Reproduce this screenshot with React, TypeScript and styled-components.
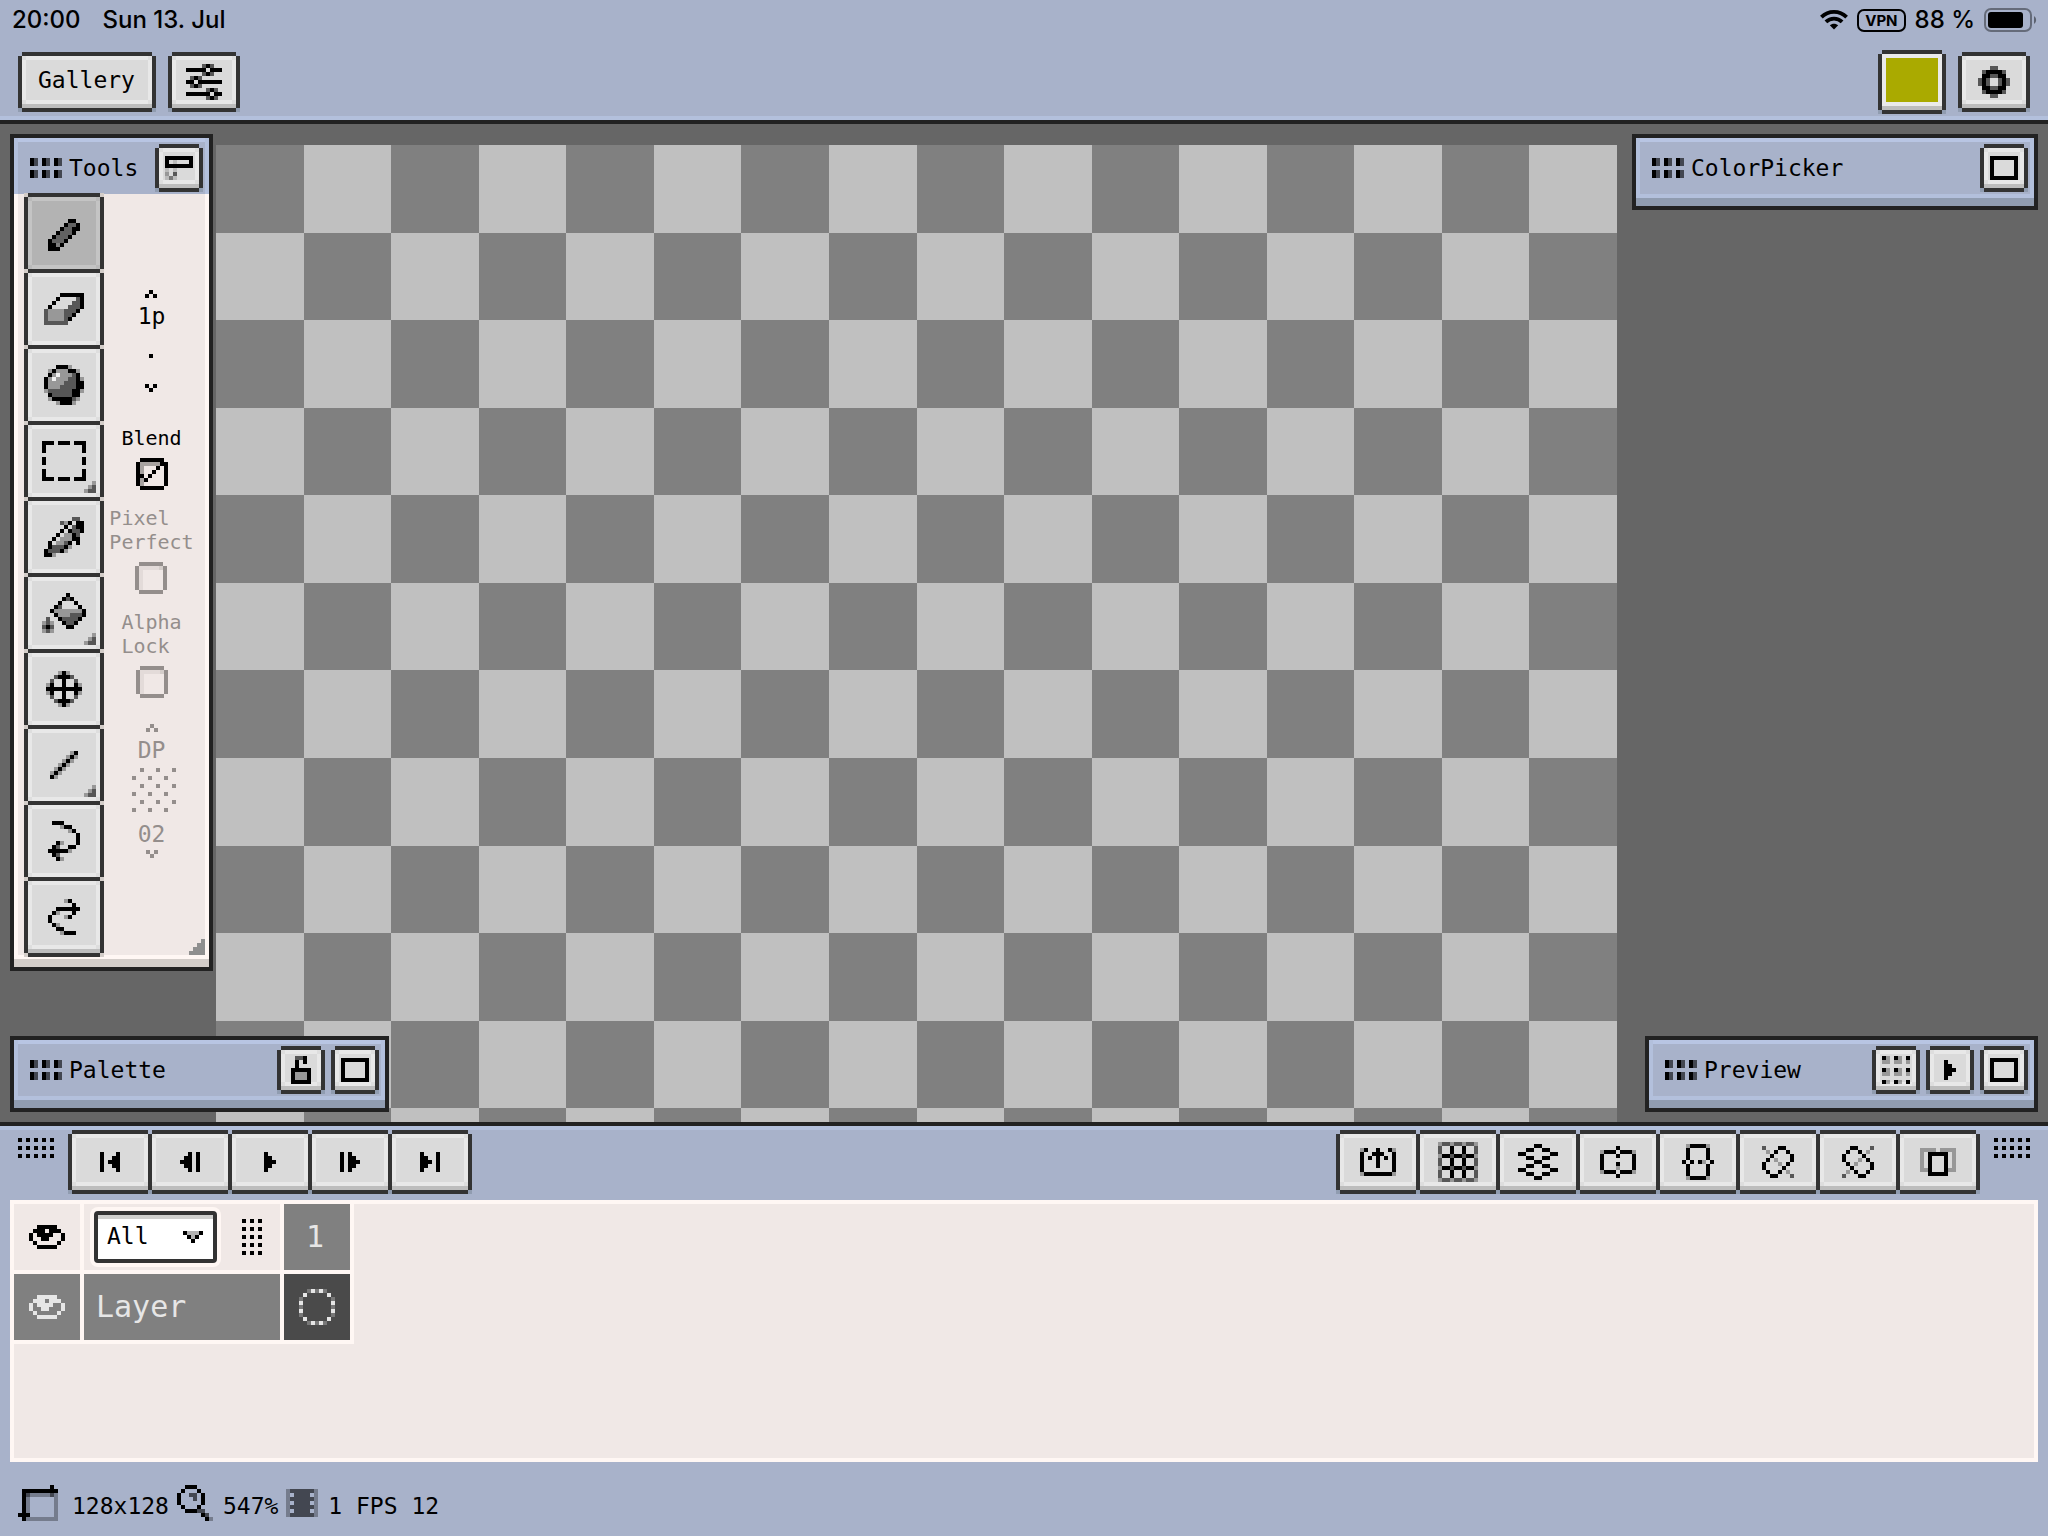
import React from "react";
import styled, { createGlobalStyle, css } from "styled-components";

const c = {
  bar: "#a8b2ca",
  barLight: "#b3c0dc",
  barTop: "#b8c5e3",
  barShade: "#909cb0",
  ink: "#222222",
  edge: "#333333",
  paper: "#f0e8e6",
  paperLight: "#fff7f4",
  paperShade: "#d3cdc9",
  desk: "#666666",
  cell: "#808080",
  cellDark: "#4a4a4a",
  cellText: "#e6e6e6",
  muted: "#948e8c",
};

const mono = `"DejaVu Sans Mono", "Liberation Mono", monospace`;
const sans = `Inter, "Liberation Sans", sans-serif`;

const GlobalStyle = createGlobalStyle`
  *, *::before, *::after { box-sizing: border-box; }
  body { margin: 0; background: ${c.bar}; }
  button, input, select { margin: 0; padding: 0; font: inherit; color: inherit; }
`;

/* ---------- pixel art ---------- */

const PX = 4;
const ALPHA: Record<string, number> = { "#": 1, d: 0.6, m: 0.45, g: 0.3, l: 0.14 };

function runs(rows: string[], key: string) {
  let d = "";
  rows.forEach((row, y) => {
    let x = 0;
    while (x < row.length) {
      if (row[x] !== key) {
        x++;
        continue;
      }
      let end = x;
      while (end < row.length && row[end] === key) end++;
      d += `M${x} ${y}h${end - x}v1h${x - end}z`;
      x = end;
    }
  });
  return d;
}

const Svg = styled.svg`
  display: block;
  flex: none;
  shape-rendering: crispEdges;
`;

function Pixels({ rows }: { rows: string[] }) {
  const w = Math.max(...rows.map((r) => r.length));
  const h = rows.length;
  return (
    <Svg width={w * PX} height={h * PX} viewBox={`0 0 ${w} ${h}`} fill="currentColor" aria-hidden="true">
      {Object.keys(ALPHA).map((key) => {
        const d = runs(rows, key);
        return d ? <path key={key} d={d} fillOpacity={ALPHA[key]} /> : null;
      })}
      {runs(rows, "w") && <path d={runs(rows, "w")} fill="#fff" fillOpacity={0.6} />}
    </Svg>
  );
}

const mirror = (rows: string[]) => rows.map((r) => r.split("").reverse().join(""));

const art = {
  sliders: ["....d#d..", "#####.###", "....d#d..", ".d#d.....", "##.######", ".d#d.....", ".....d#d.", "######.##", ".....d#d."],
  gear: ["...dd...", ".d####d.", ".##dd##.", "d#d..d#d", "d#d..d#d", ".##dd##.", ".d####d.", "...dd..."],
  handle: ["#d.#d.#d", "#d.#d.#d", "........", "#d.#d.#d", "#d.#d.#d"],
  dock: ["#######", "#.l...#", "#######", "l.l....", "g.d....", "lml...."],
  square: ["#######", "#.....#", "#.....#", "#.....#", "#.....#", "#######"],
  lock: [".dd#.", ".#.#.", ".#...", "#####", "#ggg#", "#ggg#", "#####"],
  tiles: ["#g.#g.#", "gg.gg.g", ".......", "#g.#g.#", "gg.gg.g", ".......", "#g.#g.#"],
  pencil: ["", ".....##.", "....#mm#", "...#mm##", "..#mmm#.", ".#mmm#..", "#mmm#...", "##g#....", "###....."],
  eraser: ["....######", "...#....d#", "..#....dd#", ".#....ddd#", "dggggddd#.", "dggggdd#..", "dggggd#...", "dddddd...."],
  ball: ["...###g...", ".g#ggg##g.", ".#gwgggd#.", "#gwgggdd#g", "#ggggddd##", "#gggdddd##", "gdddddd##g", ".#ddddd##.", ".g#####dg.", "...g###g.."],
  select: [
    "###.###.###",
    "#.........#",
    "#.........#",
    "...........",
    "#.........#",
    "#.........#",
    "...........",
    "#.........#",
    "#.........#",
    "###.###.###",
  ],
  dropper: [".......dd.", "....dg#.##", ".....#.d##", "....#.#dd#", "...#.gg#d.", "..#.ggg##.", ".#.ggd#.#.", ".#ddd#g...", "#ddd#g....", "##g......."],
  bucket: [
    "......#....",
    ".....#d#...",
    "....#...#..",
    "...#d....#.",
    "..#ggggggg#",
    "...#gggddd#",
    ".d..#dddd#.",
    "gdg..#dd#..",
    "d#d...##...",
    "gdg........",
  ],
  move: ["...g#g...", "..d###d..", ".d..#..d.", "g#..#..#g", "#########", "g#..#..#g", ".d..#..d.", "..d###d..", "...g#g..."],
  line: [".....g#", "....g#g", "...g#g.", "..g#g..", ".g#g...", "g#g....", "#g....."],
  undo: [".###....", "...g##..", ".....g#.", ".......#", ".......#", "..#g...#", ".#d..##.", "#####g..", ".#d.....", "..#g...."],
  redo: ["....g#..", "......#.", "..######", ".#g...#.", "#...g#..", "#.......", ".#g.....", "..##....", "...g###."],
  corner: ["..g", ".gd", "gdd"],
  resize: ["...#", "..##", ".###", "####"],
  up: [".#.", "#.#"],
  down: ["#.#", ".#."],
  dot: ["#"],
  checked: [".######.", "#ggggg##", "#g...#.#", "#g..#..#", "##.#...#", "#g#....#", "#g.....#", ".######."],
  unchecked: [".######.", "#lllllg#", "#l.....#", "#l.....#", "#l.....#", "#l.....#", "#l.....#", ".######."],
  dither: [
    "...#...#...#",
    "",
    ".#...#...#..",
    "",
    "...#...#...#",
    "",
    ".#...#...#..",
    "",
    "...#...#...#",
    "",
    ".#...#...#..",
  ],
  dots5x3: ["#.#.#.#.#", "", "#.#.#.#.#", "", "#.#.#.#.#"],
  dots3x5: ["#.#.#", "", "#.#.#", "", "#.#.#", "", "#.#.#", "", "#.#.#"],
  last: ["#...#", "##..#", "###.#", "##..#", "#...#"],
  next: ["#.#..", "#.##.", "#.###", "#.##.", "#.#.."],
  play: ["#..", "##.", "###", "##.", "#.."],
  share: ["g#..#..#g", "#..###..#", "#.#.#.#.#", "#...#...#", "#...#...#", "#.......#", "g#######g"],
  grid: [
    "gddgddgddg",
    "d..#..#..d",
    "d..#..#..d",
    "g##d##d##g",
    "d..#..#..d",
    "d..#..#..d",
    "g##d##d##g",
    "d..#..#..d",
    "d..#..#..d",
    "gddgddgddg",
  ],
  layers: ["....##....", "..##..##..", "##......##", "..##..##..", "....##....", "..##..##..", "##......##", "..##..##..", "....##...."],
  flipX: ["....#....", "g###.###g", "#...#...#", "#.......#", "#...#...#", "#...g...#", "g###.###g", "....#...."],
  flipY: [".g####g.", ".#....#.", ".#....#.", ".#....#.", "#.#.#g.#", ".#....#.", ".#....#.", ".#....#.", ".g####g."],
  diagonal: ["d...##..", ".g.#..#.", "..#....#", ".#.g...#", "#...g.#.", "#....#..", ".#..#.g.", "..##...d"],
  onion: ["gggg.gggg", "g.#####.g", "g.#...#.g", "g.#...#.g", "g.#...#.g", "gg#...#gg", "..#####.."],
  eye: ["..#####..", ".###.###.", "#.####..#", "#..##...#", ".#.....#.", "..#####.."],
  arrow: ["#ggg#", ".#g#.", "..#.."],
  cel: ["..g#g#g..", ".#.....#.", "g.......g", "#.......#", "g.......g", "#.......#", "g.......g", ".#.....#.", "..g#g#g.."],
  size: [
    "........#..",
    ".#########.",
    ".#dgggggdg.",
    ".#g......g.",
    ".#g......g.",
    ".#g......g.",
    ".#g......g.",
    "###......g.",
    ".#gggggggg.",
  ],
  lens: ["..###....", ".#...#...", "#..dd.#..", "#...d.#..", "#.....#..", ".#...#...", "..###dd..", "......#d.", ".......#g"],
  film: ["gddddddg", "g.dddd.g", "gddddddg", "g.dddd.g", "gddddddg", "g.dddd.g", "gddddddg"],
};

/* ---------- shared controls ---------- */

const layer = (color: string, x: number, y: number, w: number, h: number) =>
  `linear-gradient(${color}, ${color}) ${x}px ${y}px / calc(100% - ${w}px) calc(100% - ${h}px) no-repeat`;

const raised = (foot: string) => css`
  background: ${[
    layer("#dadada", 8, 8, 16, 20),
    layer("#e8e8e8", 8, 4, 16, 12),
    layer("#e8e8e8", 4, 8, 8, 20),
    layer("#dedede", 4, 4, 8, 12),
    layer("#bdbdbd", 4, 4, 8, 8),
    layer(c.edge, 4, 0, 8, 0),
    layer(c.edge, 0, 4, 0, 8),
    `linear-gradient(${foot}, ${foot}) 0 100% / 100% 4px no-repeat`,
  ].join(",")};
`;

const flat = (face: string, rim: string, notch: string) => css`
  background: ${[
    layer(face, 8, 8, 16, 16),
    layer(rim, 8, 4, 16, 8),
    layer(rim, 4, 8, 8, 16),
    layer(notch, 4, 4, 8, 8),
    layer(c.edge, 4, 0, 8, 0),
    layer(c.edge, 0, 4, 0, 8),
    layer(c.paperShade, 0, 0, 0, 0),
  ].join(",")};
`;

const PixelButton = styled.button<{ $w?: number; $h: number }>`
  ${raised(c.barShade)}
  display: flex;
  align-items: center;
  justify-content: center;
  flex: none;
  width: ${(p) => (p.$w ? `${p.$w}px` : "auto")};
  height: ${(p) => p.$h}px;
  border: 0;
  color: #000;
  cursor: pointer;
`;

const TextButton = styled(PixelButton)`
  padding: 0 21px 4px 20px;
  font: 23px/24px ${mono};
`;

const ColorButton = styled(PixelButton)`
  background: ${[
    layer("#aaaa00", 8, 8, 16, 20),
    layer("#eaeaea", 4, 4, 8, 12),
    layer("#bdbdbd", 4, 4, 8, 8),
    layer(c.edge, 4, 0, 8, 0),
    layer(c.edge, 0, 4, 0, 8),
    `linear-gradient(${c.barShade}, ${c.barShade}) 0 100% / 100% 4px no-repeat`,
  ].join(",")};
`;

/* ---------- page ---------- */

const Page = styled.div`
  display: flex;
  flex-direction: column;
  min-height: 100vh;
  background: ${c.bar};
  color: #000;
  font: 23px/24px ${mono};
`;

const Header = styled.header`
  border-bottom: 4px solid ${c.ink};
  box-shadow: inset 0 -4px ${c.barLight};
`;

const StatusBar = styled.div`
  display: flex;
  align-items: center;
  justify-content: space-between;
  height: 40px;
  padding: 0 10px 0 12px;
  font: 500 24px/24px ${sans};
`;

const StatusGroup = styled.div<{ $gap: number }>`
  display: flex;
  align-items: center;
  gap: ${(p) => p.$gap}px;
`;

const Vpn = styled.span`
  padding: 0 6px;
  border: 2px solid #000;
  border-radius: 7px;
  font: 700 15px/19px ${sans};
`;

const Toolbar = styled.div`
  display: flex;
  align-items: center;
  justify-content: space-between;
  padding: 10px 18px 6px;
`;

const Row = styled.div<{ $gap: number }>`
  display: flex;
  align-items: center;
  gap: ${(p) => p.$gap}px;
`;

const Workspace = styled.main`
  position: relative;
  flex: 1;
  min-height: 860px;
  overflow: hidden;
  background: ${c.desk};
`;

const Sheet = styled.svg`
  position: absolute;
  left: 216px;
  top: 21px;
  width: 1401px;
  shape-rendering: crispEdges;
`;

const Panel = styled.section<{ $w: number; $left?: boolean; $bottom?: boolean }>`
  position: absolute;
  ${(p) => (p.$left ? "left" : "right")}: 10px;
  ${(p) => (p.$bottom ? "bottom" : "top")}: 10px;
  width: ${(p) => p.$w}px;
  border: 4px solid ${c.ink};
  background: ${c.bar};
`;

const PanelHead = styled.div`
  display: flex;
  align-items: center;
  gap: 7px;
  padding: 6px 6px 2px 16px;
  box-shadow: inset 4px 0 ${c.barLight}, inset -4px 0 ${c.barLight}, inset 0 4px ${c.barTop};
`;

const PanelTitle = styled.h2`
  flex: 1;
  margin: 0;
  font: 23px/24px ${mono};
`;

const PanelFoot = styled.div<{ $paper?: boolean }>`
  height: 12px;
  border-top: 4px solid ${(p) => (p.$paper ? c.paperLight : c.barLight)};
  background: ${(p) => (p.$paper ? c.paperShade : c.barShade)};
`;

const ToolsBody = styled.div`
  position: relative;
  display: flex;
  padding: 0 10px;
  background: ${c.paper};
  box-shadow: inset 4px 0 ${c.paperLight}, inset -4px 0 ${c.paperLight};
`;

const ToolStack = styled.div`
  display: flex;
  flex-direction: column;
  margin: -1px 0 -2px;
`;

const ToolButton = styled.button<{ $active?: boolean }>`
  position: relative;
  display: flex;
  align-items: center;
  justify-content: center;
  width: 80px;
  height: 80px;
  border: 0;
  color: #000;
  cursor: pointer;
  ${(p) => (p.$active ? flat("#b3b3b3", "#c4c4c4", "#bababa") : flat("#dadada", "#e8e8e8", "#dedede"))}

  & + & {
    margin-top: -4px;
  }

  &:last-child {
    ${raised(c.paperShade)}
  }
`;

const ToolCorner = styled.span`
  position: absolute;
  right: 8px;
  bottom: 8px;
`;

const ResizeCorner = styled.span`
  position: absolute;
  right: 4px;
  bottom: 0;
  color: #8f8f8f;
`;

const Options = styled.div`
  display: flex;
  flex: 1;
  flex-direction: column;
  align-items: center;
  gap: 16px;
  padding-top: 96px;
`;

const Stepper = styled.div<{ $muted?: boolean }>`
  display: flex;
  flex-direction: column;
  align-items: center;
  margin-bottom: ${(p) => (p.$muted ? 0 : 18)}px;
  padding-top: ${(p) => (p.$muted ? 10 : 0)}px;
  color: ${(p) => (p.$muted ? c.muted : "#000")};
`;

const StepButton = styled.button`
  display: block;
  border: 0;
  background: none;
  cursor: pointer;
`;

const StepText = styled.span<{ $bottom?: number }>`
  padding: 6px 0 ${(p) => p.$bottom ?? 0}px;
`;

const BrushPreview = styled.span<{ $h: number }>`
  display: flex;
  align-items: center;
  height: ${(p) => p.$h}px;
`;

const Check = styled.label<{ $muted?: boolean }>`
  display: flex;
  flex-direction: column;
  align-items: center;
  gap: 8px;
  color: ${(p) => (p.$muted ? c.muted : "#000")};
  font: 20px/24px ${mono};
`;

const CheckBox = styled.span`
  display: grid;

  & > * {
    grid-area: 1 / 1;
  }

  input {
    width: 32px;
    height: 32px;
    opacity: 0;
  }
`;

/* ---------- timeline ---------- */

const Timeline = styled.section`
  padding: 4px 10px 0;
  border-top: 4px solid ${c.ink};
  box-shadow: inset 0 4px ${c.barLight};
`;

const TimelineBar = styled.div`
  display: flex;
  align-items: flex-start;
  justify-content: space-between;
  padding: 0 8px;
`;

const TimelineGroup = styled.div`
  display: flex;
  gap: 14px;
`;

const DragDots = styled.span`
  padding-top: 8px;
`;

const Strip = styled.div`
  display: flex;

  ${PixelButton} + ${PixelButton} {
    margin-left: -4px;
  }
`;

const LayerPanel = styled.div`
  min-height: 262px;
  margin-top: 6px;
  border: 4px solid ${c.paperLight};
  background: ${c.paper};
`;

const LayerGrid = styled.div`
  display: grid;
  grid-template-columns: 66px 196px 66px;
  grid-auto-rows: 66px;
  gap: 4px;
  width: fit-content;
  padding: 0 4px 4px 0;
  background: ${c.paperLight};
`;

const Cell = styled.div<{ $bg?: string; $fg?: string }>`
  display: flex;
  align-items: center;
  justify-content: center;
  background: ${(p) => p.$bg ?? c.paper};
  color: ${(p) => p.$fg ?? "#000"};
  font: 30px/36px ${mono};
`;

const CellButton = styled(Cell).attrs({ as: "button" })`
  border: 0;
  cursor: pointer;
`;

const FrameCell = styled(Cell)`
  padding-right: 4px;
`;

const NameCell = styled(Cell)`
  justify-content: flex-start;
  padding: 0 12px;
`;

const FilterCell = styled(Cell)`
  justify-content: space-between;
  padding: 0 18px 0 10px;
`;

const SelectBox = styled.div`
  position: relative;
`;

const Select = styled.select`
  appearance: none;
  display: block;
  width: 123px;
  height: 52px;
  padding: 0 9px 2px;
  border: 4px solid ${c.edge};
  border-radius: 4px;
  background: linear-gradient(#d0d0ce, #d0d0ce) 0 0 / 100% 4px no-repeat #fff;
  box-shadow: 0 0 0 4px ${c.paperLight};
  font: 23px/24px ${mono};
`;

const SelectArrow = styled.span`
  position: absolute;
  right: 14px;
  top: 20px;
  pointer-events: none;
`;

const InfoBar = styled.footer`
  display: flex;
  align-items: center;
  gap: 8px;
  height: 74px;
  padding: 8px 18px 0;
`;

const InfoText = styled.span`
  padding-top: 6px;
`;

/* ---------- drawing of status glyphs ---------- */

const Wifi = () => (
  <svg width="28" height="20" viewBox="0 0 28 20" aria-hidden="true">
    <g fill="none" stroke="#000" strokeWidth="3.8">
      <path d="M1.4 7.2C8.4 0.2 19.6 0.2 26.6 7.2" />
      <path d="M5.9 11.9C10.4 7.4 17.6 7.4 22.1 11.9" />
    </g>
    <path d="M14 19.6L9.8 15.3C12.1 13.2 15.9 13.2 18.2 15.3Z" />
  </svg>
);

const Battery = () => (
  <svg width="54" height="24" viewBox="0 0 54 24" aria-hidden="true">
    <rect x="1" y="1" width="46" height="22" rx="6" fill="none" stroke="#000" strokeOpacity="0.4" strokeWidth="2" />
    <rect x="4" y="4" width="35" height="16" rx="3" />
    <path d="M50 8.2C52.8 9.4 52.8 14.6 50 15.8Z" fillOpacity="0.45" />
  </svg>
);

function CheckerSheet() {
  const cells: string[] = [];
  for (let y = 0; y < 16; y++) for (let x = 0; x < 16; x++) if ((x + y) % 2) cells.push(`M${x} ${y}h1v1h-1z`);
  return (
    <Sheet viewBox="0 0 16 16" aria-label="Canvas">
      <rect width="16" height="16" fill="#808080" />
      <path d={cells.join("")} fill="#c0c0c0" />
    </Sheet>
  );
}

const tools: { name: string; rows: string[]; more?: boolean }[] = [
  { name: "Pencil", rows: art.pencil },
  { name: "Eraser", rows: art.eraser },
  { name: "Smudge", rows: art.ball },
  { name: "Selection", rows: art.select, more: true },
  { name: "Eyedropper", rows: art.dropper },
  { name: "Fill", rows: art.bucket, more: true },
  { name: "Move", rows: art.move },
  { name: "Line", rows: art.line, more: true },
  { name: "Undo", rows: art.undo },
  { name: "Redo", rows: art.redo },
];

const playback = [
  { name: "First frame", rows: mirror(art.last) },
  { name: "Previous frame", rows: mirror(art.next) },
  { name: "Play", rows: art.play },
  { name: "Next frame", rows: art.next },
  { name: "Last frame", rows: art.last },
];

const canvasTools = [
  { name: "Export", rows: art.share },
  { name: "Grid", rows: art.grid },
  { name: "Layers", rows: art.layers },
  { name: "Mirror horizontally", rows: art.flipX },
  { name: "Mirror vertically", rows: art.flipY },
  { name: "Mirror diagonally", rows: art.diagonal },
  { name: "Mirror anti-diagonally", rows: mirror(art.diagonal) },
  { name: "Onion skin", rows: art.onion },
];

function Head({ title, buttons }: { title: string; buttons: { name: string; rows: string[] }[] }) {
  return (
    <PanelHead>
      <Pixels rows={art.handle} />
      <PanelTitle>{title}</PanelTitle>
      <Row $gap={6}>
        {buttons.map((b) => (
          <PixelButton key={b.name} $w={48} $h={48} aria-label={b.name}>
            <Pixels rows={b.rows} />
          </PixelButton>
        ))}
      </Row>
    </PanelHead>
  );
}

function Option({ lines, checked = false, muted }: { lines: string[]; checked?: boolean; muted?: boolean }) {
  const [on, setOn] = React.useState(checked);
  return (
    <Check $muted={muted}>
      <span>
        {lines.map((line, i) => (
          <React.Fragment key={line}>
            {i > 0 && <br />}
            {line}
          </React.Fragment>
        ))}
      </span>
      <CheckBox>
        <Pixels rows={on ? art.checked : art.unchecked} />
        <input type="checkbox" checked={on} disabled={muted} onChange={() => setOn(!on)} />
      </CheckBox>
    </Check>
  );
}

export default function App() {
  const expand = { name: "Expand", rows: art.square };
  return (
    <Page>
      <GlobalStyle />
      <Header>
        <StatusBar>
          <StatusGroup $gap={22}>
            <span>20:00</span>
            <span>Sun 13. Jul</span>
          </StatusGroup>
          <StatusGroup $gap={9}>
            <Wifi />
            <Vpn>VPN</Vpn>
            <span>88 %</span>
            <Battery />
          </StatusGroup>
        </StatusBar>
        <Toolbar>
          <Row $gap={12}>
            <TextButton $h={60}>Gallery</TextButton>
            <PixelButton $w={72} $h={60} aria-label="Adjustments">
              <Pixels rows={art.sliders} />
            </PixelButton>
          </Row>
          <Row $gap={12}>
            <ColorButton $w={68} $h={64} aria-label="Current color" />
            <PixelButton $w={72} $h={60} aria-label="Settings">
              <Pixels rows={art.gear} />
            </PixelButton>
          </Row>
        </Toolbar>
      </Header>

      <Workspace>
        <CheckerSheet />

        <Panel $w={203} $left>
          <Head title="Tools" buttons={[{ name: "Dock", rows: art.dock }]} />
          <ToolsBody>
            <ToolStack>
              {tools.map((t, i) => (
                <ToolButton key={t.name} $active={i === 0} aria-label={t.name}>
                  <Pixels rows={t.rows} />
                  {t.more && (
                    <ToolCorner>
                      <Pixels rows={art.corner} />
                    </ToolCorner>
                  )}
                </ToolButton>
              ))}
            </ToolStack>
            <Options>
              <Stepper>
                <StepButton aria-label="Larger brush">
                  <Pixels rows={art.up} />
                </StepButton>
                <StepText>1p</StepText>
                <BrushPreview $h={56}>
                  <Pixels rows={art.dot} />
                </BrushPreview>
                <StepButton aria-label="Smaller brush">
                  <Pixels rows={art.down} />
                </StepButton>
              </Stepper>
              <Option lines={["Blend"]} checked />
              <Option lines={["Pixel", "Perfect"]} muted />
              <Option lines={["Alpha", "Lock"]} muted />
              <Stepper $muted>
                <StepButton aria-label="Next dither pattern">
                  <Pixels rows={art.up} />
                </StepButton>
                <StepText $bottom={2}>DP</StepText>
                <BrushPreview $h={52}>
                  <Pixels rows={art.dither} />
                </BrushPreview>
                <StepText $bottom={4}>02</StepText>
                <StepButton aria-label="Previous dither pattern">
                  <Pixels rows={art.down} />
                </StepButton>
              </Stepper>
            </Options>
            <ResizeCorner>
              <Pixels rows={art.resize} />
            </ResizeCorner>
          </ToolsBody>
          <PanelFoot $paper />
        </Panel>

        <Panel $w={406}>
          <Head title="ColorPicker" buttons={[expand]} />
          <PanelFoot />
        </Panel>

        <Panel $w={379} $left $bottom>
          <Head title="Palette" buttons={[{ name: "Unlocked", rows: art.lock }, expand]} />
          <PanelFoot />
        </Panel>

        <Panel $w={393} $bottom>
          <Head title="Preview" buttons={[{ name: "Tiling", rows: art.tiles }, { name: "Play", rows: art.play }, expand]} />
          <PanelFoot />
        </Panel>
      </Workspace>

      <Timeline>
        <TimelineBar>
          <TimelineGroup>
            <DragDots>
              <Pixels rows={art.dots5x3} />
            </DragDots>
            <Strip>
              {playback.map((b) => (
                <PixelButton key={b.name} $w={84} $h={64} aria-label={b.name}>
                  <Pixels rows={b.rows} />
                </PixelButton>
              ))}
            </Strip>
          </TimelineGroup>
          <TimelineGroup>
            <Strip>
              {canvasTools.map((b) => (
                <PixelButton key={b.name} $w={84} $h={64} aria-label={b.name}>
                  <Pixels rows={b.rows} />
                </PixelButton>
              ))}
            </Strip>
            <DragDots>
              <Pixels rows={art.dots5x3} />
            </DragDots>
          </TimelineGroup>
        </TimelineBar>

        <LayerPanel>
          <LayerGrid>
            <CellButton aria-label="Toggle all layers">
              <Pixels rows={art.eye} />
            </CellButton>
            <FilterCell>
              <SelectBox>
                <Select aria-label="Layer filter" defaultValue="All">
                  <option>All</option>
                </Select>
                <SelectArrow>
                  <Pixels rows={art.arrow} />
                </SelectArrow>
              </SelectBox>
              <Pixels rows={art.dots3x5} />
            </FilterCell>
            <FrameCell $bg={c.cell} $fg={c.cellText}>
              1
            </FrameCell>
            <CellButton $bg={c.cell} $fg={c.cellText} aria-label="Toggle layer">
              <Pixels rows={art.eye} />
            </CellButton>
            <NameCell $bg={c.cell} $fg={c.cellText}>
              Layer
            </NameCell>
            <CellButton $bg={c.cellDark} $fg={c.cellText} aria-label="Frame 1">
              <Pixels rows={art.cel} />
            </CellButton>
          </LayerGrid>
        </LayerPanel>
      </Timeline>

      <InfoBar>
        <Row $gap={10}>
          <Pixels rows={art.size} />
          <InfoText>128x128</InfoText>
        </Row>
        <Row $gap={10}>
          <Pixels rows={art.lens} />
          <InfoText>547%</InfoText>
        </Row>
        <Row $gap={10}>
          <Pixels rows={art.film} />
          <InfoText>1 FPS 12</InfoText>
        </Row>
      </InfoBar>
    </Page>
  );
}
